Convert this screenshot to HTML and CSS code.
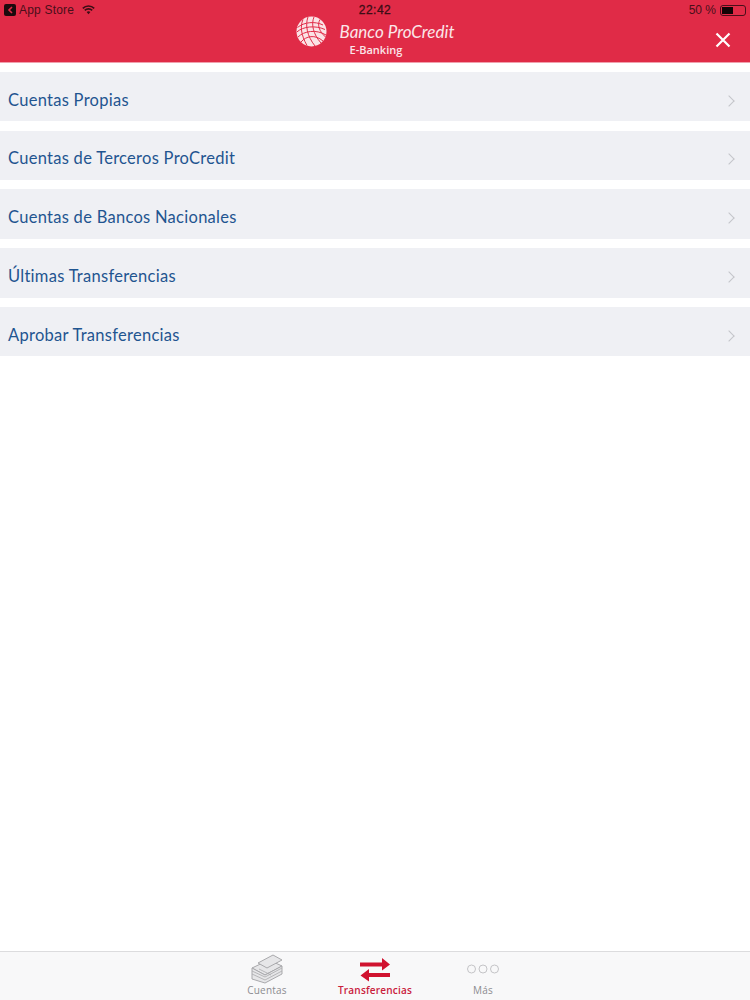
FILE: index.html
```html
<!DOCTYPE html>
<html lang="es">
<head>
    <meta charset="UTF-8">
    <meta name="viewport" content="width=device-width, initial-scale=1.0">
    <title>Banco ProCredit | E-Banking</title>
    <link rel="stylesheet" href="styles.css">
</head>
<body>
    <div class="app">
        <header class="header">
            <div class="status-bar">
                <div class="status-left">
                    <span class="back-badge">
                        <svg width="7" height="8" viewBox="0 0 7 8"><path d="M5 1 2 4l3 3" fill="none" stroke="#e12c48" stroke-width="1.6"/></svg>
                    </span>
                    <span class="status-app">App Store</span>
                    <svg class="wifi" width="13" height="10" viewBox="0 0 13 10">
                        <path d="M.8 3.4a8 8 0 0 1 11.4 0M2.8 5.4a5.2 5.2 0 0 1 7.4 0" fill="none" stroke="#3b0d15" stroke-width="1.6"/>
                        <path d="M4.6 7.1a2.7 2.7 0 0 1 3.8 0L6.5 9.2z" fill="#3b0d15"/>
                    </svg>
                </div>
                <div class="status-time">22:42</div>
                <div class="status-right">
                    <span>50 %</span>
                    <span class="battery"><span class="battery-level"></span></span>
                </div>
            </div>
            <div class="brand-bar">
                <div class="brand">
                    <svg class="globe" width="31" height="31" viewBox="0 0 31 31">
                        <circle cx="15.5" cy="15.5" r="15" fill="#fbe3e6"/>
                        <g fill="none" stroke="#e12c48" stroke-width="1">
                            <path d="M1.5 11.5C8 6 19 5 27 9"/>
                            <path d="M.8 16C7 10.5 19 9 29 13.5"/>
                            <path d="M2 21C8 15 20 13 30 19"/>
                            <path d="M5 26C10 20 19 18 27 25"/>
                            <path d="M7 3.5C4 10 5 19 11 29.5"/>
                            <path d="M12 1C9 9 11 20 19 30"/>
                            <path d="M18 1C15 8 17 18 25 27"/>
                            <path d="M24 3.5C21 9 23 15 29.5 21"/>
                        </g>
                    </svg>
                    <div class="brand-text">
                        <span class="brand-name">Banco ProCredit</span>
                        <span class="brand-sub">E-Banking</span>
                    </div>
                </div>
                <button class="close-button" aria-label="Cerrar">
                    <svg width="16" height="16" viewBox="0 0 16 16"><path d="M1.5 1.5l13 13M14.5 1.5l-13 13" stroke="#fff" stroke-width="2.2"/></svg>
                </button>
            </div>
        </header>

        <main class="menu">
            <a class="menu-item">Cuentas Propias<span class="chevron"></span></a>
            <a class="menu-item">Cuentas de Terceros ProCredit<span class="chevron"></span></a>
            <a class="menu-item">Cuentas de Bancos Nacionales<span class="chevron"></span></a>
            <a class="menu-item">Últimas Transferencias<span class="chevron"></span></a>
            <a class="menu-item">Aprobar Transferencias<span class="chevron"></span></a>
        </main>

        <nav class="tab-bar">
            <a class="tab">
                <svg width="34" height="30" viewBox="0 0 34 30">
                    <g fill="#e6e6e8" stroke="#a9a9ac" stroke-width="1" stroke-linejoin="round">
                        <path d="M2 14 19 6l13 6-17 9z"/>
                        <path d="M2 14v11l13 4 17-9v-8l-17 9z"/>
                        <path d="M8 9 23 1l9 5-15 8z"/>
                    </g>
                    <path d="M2 17l13 6 17-9M2 20l13 6 17-9M9 15l12 6" fill="none" stroke="#a9a9ac" stroke-width=".8"/>
                </svg>
                <span>Cuentas</span>
            </a>
            <a class="tab tab-active">
                <svg width="34" height="30" viewBox="0 0 34 30">
                    <path d="M2 8.5h22V4l8 6.5-8 6V12.500H2zM32 19H11v-4l-8.500 6.500 8.500 6V23h21z" fill="#d0122f"/>
                </svg>
                <span>Transferencias</span>
            </a>
            <a class="tab">
                <svg width="34" height="30" viewBox="0 0 34 30">
                    <g fill="none" stroke="#c4c4c7" stroke-width="1">
                        <circle cx="5.500" cy="15" r="4"/>
                        <circle cx="17" cy="15" r="4"/>
                        <circle cx="28.500" cy="15" r="4"/>
                    </g>
                </svg>
                <span>Más</span>
            </a>
        </nav>
    </div>
</body>
</html>
```

FILE: styles.css
```css
/* Colours */
:root {
    --red: #e02b47;
    --row-bg: #eff0f4;
    --link-blue: #1f5590;
    --tab-grey: #8c8c90;
    --tab-red: #c9203c;
}

*, *::before, *::after {
    margin: 0;
    padding: 0;
    box-sizing: border-box;
}

body {
    font-family: "Lato", "Open Sans", sans-serif;
    background: #fff;
}

.app {
    height: 100vh;
    display: flex;
    flex-direction: column;
}

/* Header */
.header {
    height: 63px;
    background: var(--red);
    border-bottom: 1px solid #f0a0ad;
    display: flex;
    flex-direction: column;
}

.status-bar {
    height: 20px;
    padding: 0 4px;
    display: grid;
    grid-template-columns: 1fr auto 1fr;
    align-items: center;
    font-family: "Liberation Sans", Arial, sans-serif;
    font-size: 12px;
    color: #4a0f1a;
}

.status-left {
    display: flex;
    align-items: center;
    gap: 3px;
}

.status-app {
    letter-spacing: .2px;
}

.back-badge {
    width: 12px;
    height: 12px;
    border-radius: 2px;
    background: #1c0a0d;
    display: flex;
    align-items: center;
    justify-content: center;
}

.wifi {
    margin-left: 5px;
}

.status-time {
    color: #3b0d15;
    letter-spacing: .5px;
    -webkit-text-stroke: .3px #3b0d15;
}

.status-right {
    display: flex;
    align-items: center;
    justify-content: flex-end;
    gap: 4px;
}

.battery {
    width: 26px;
    height: 11px;
    border: 1px solid #4a0f1a;
    border-radius: 3px;
    padding: 1px;
    display: block;
}

.battery-level {
    display: block;
    width: 50%;
    height: 100%;
    background: #120406;
}

.brand-bar {
    flex: 1;
    position: relative;
    display: flex;
    justify-content: center;
}

.brand {
    display: flex;
    align-items: flex-start;
    gap: 13px;
    margin-top: -4px;
}

.brand-text {
    display: flex;
    flex-direction: column;
    color: #fbe6e9;
    padding-top: 6px;
}

.brand-name {
    font-style: italic;
    font-size: 17px;
    line-height: 20px;
    white-space: nowrap;
}

.brand-sub {
    font-family: "Open Sans", sans-serif;
    font-size: 11px;
    font-weight: 600;
    line-height: 14px;
    padding-left: 10px;
    margin-top: 1px;
}

.close-button {
    position: absolute;
    right: 19px;
    top: 12px;
    width: 16px;
    height: 16px;
    background: none;
    border: none;
    display: block;
}

/* Menu */
.menu {
    flex: 1;
    display: flex;
    flex-direction: column;
    gap: 9.35px;
    padding-top: 9px;
}

.menu-item {
    height: 49.4px;
    padding: 6px 17px 0 8px;
    background: var(--row-bg);
    color: var(--link-blue);
    font-size: 16.5px;
    letter-spacing: .28px;
    display: flex;
    align-items: center;
    justify-content: space-between;
}

.chevron {
    width: 8px;
    height: 8px;
    margin-top: 2px;
    border-top: 1.5px solid #c4c5c9;
    border-right: 1.5px solid #c4c5c9;
    transform: rotate(45deg);
}

/* Tab bar */
.tab-bar {
    height: 49px;
    background: #f8f8f9;
    border-top: 1px solid #dcdcde;
    display: flex;
    justify-content: center;
}

.tab {
    width: 108px;
    display: flex;
    flex-direction: column;
    align-items: center;
    font-family: "Open Sans", sans-serif;
    font-size: 10px;
    line-height: 12px;
    color: var(--tab-grey);
    padding-top: 2px;
    letter-spacing: .2px;
}

.tab-active {
    color: var(--tab-red);
    font-weight: 600;
}
```
